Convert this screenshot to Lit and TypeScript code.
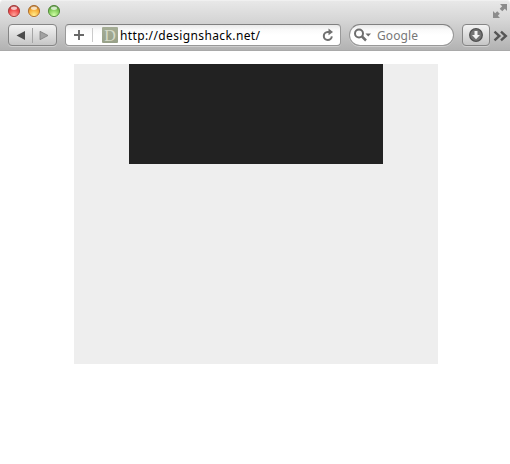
import { LitElement, html, css } from "lit";
import { customElement } from "lit/decorators.js";

@customElement("browser-chrome")
class BrowserChrome extends LitElement {
  static styles = css`
    :host { display: block; }
    * { box-sizing: border-box; }
    svg { display: block; flex: none; }
    .chrome {
      height: 51px;
      background: linear-gradient(#e9e9e9 0, #d6d6d6 20px, #b2b2b2 50px);
      border-bottom: 1px solid #a9a9a9;
      border-radius: 4px 4px 0 0;
      box-shadow: inset 0 1px #f0f0f0;
    }
    .title { height: 24px; display: flex; justify-content: space-between; padding: 4px 3px 0 7px; }
    .lights { display: flex; gap: 6px; }
    .bar { height: 22px; display: flex; gap: 8px; padding-left: 8px; }
    .button {
      height: 22px; border: 1px solid #858585; border-radius: 4px;
      background: linear-gradient(#f3f3f3, #c6c6c6);
      box-shadow: 0 1px rgba(255,255,255,.35);
      display: flex; align-items: center;
    }
    .nav { width: 49px; }
    .download { width: 28px; padding-left: 6px; }
    .field {
      height: 22px; border: 1px solid #999; border-top-color: #808080;
      background: linear-gradient(#e9e9e9, #fafafa 5px, #fff 10px, #fff);
      box-shadow: 0 1px rgba(255,255,255,.35);
      display: flex; align-items: center;
    }
    .address { width: 276px; border-radius: 4px; padding: 0 6px 0 8px; }
    .rule { width: 1px; height: 14px; background: #cbcbcb; margin: 0 9px 0 7px; }
    .favicon {
      width: 16px; height: 16px; border-radius: 1px; background: linear-gradient(#a5ad95, #98a189);
      color: #d5dac9; font: 16px/17px "Liberation Serif", serif; text-align: center;
    }
    .url { font: 12px/18px "Noto Sans", sans-serif; color: #000; margin-left: 2px; padding-top: 2px; flex: 1; white-space: nowrap; letter-spacing: .38px; }
    .search { width: 105px; border-radius: 11px; padding-left: 4px; }
    .hint { font: 12px/18px "Noto Sans", sans-serif; color: #777; margin-left: 5px; padding-top: 2px; letter-spacing: .1px; }
    .more { margin: 6px 0 0 -5px; }
  `;

  light(name: string, edge: string, mid: string, glow: string) {
    return html`<svg width="14" height="14" viewBox="0 0 14 14">
      <defs>
        <radialGradient id=${name} cx=".5" cy=".85" r=".85">
          <stop offset="0" stop-color=${glow}/><stop offset=".6" stop-color=${mid}/><stop offset="1" stop-color=${edge}/>
        </radialGradient>
      </defs>
      <circle cx="7" cy="7.5" r="6" fill="#fff" opacity=".4"/>
      <circle cx="7" cy="7" r="5.600" fill="url(#${name})" stroke=${edge} stroke-width=".9"/>
      <ellipse cx="7" cy="4.200" rx="3" ry="1.700" fill="#fff" opacity=".7"/>
    </svg>`;
  }

  render() {
    return html`<div class="chrome">
      <div class="title">
        <div class="lights">
          ${this.light("close", "#a33a3a", "#ef4747", "#ffa59b")}
          ${this.light("minimize", "#a86a2c", "#f7ac35", "#ffec8c")}
          ${this.light("zoom", "#4f8639", "#80ca58", "#d0ffa5")}
        </div>
        <svg width="14" height="14" viewBox="0 0 14 14" fill="#8c8c8c">
          <path d="M7 0h7v7l-2.200-2.200L9.300 7.300 6.700 4.700 9.200 2.200zM7 14H0V7l2.200 2.200 2-2 2.600 2.600-2 2z"/>
        </svg>
      </div>
      <div class="bar">
        <div class="button nav">
          <svg width="47" height="20" viewBox="0 0 47 20">
            <path d="M7.500 10.500 16 6v9z" fill="#4b4b4b"/>
            <path d="M23.500 3v15" stroke="#a5a5a5"/>
            <path d="M39 10.500 31 6.300v8.400z" fill="#a2a2a2" stroke="#7d7d7d" stroke-width=".8"/>
          </svg>
        </div>
        <div class="field address">
          <svg width="11" height="20" viewBox="0 0 11 20"><path d="M0 10h10M5 5v10" stroke="#686868" stroke-width="1.900"/></svg>
          <span class="rule"></span>
          <span class="favicon">D</span>
          <span class="url">http://designshack.net/</span>
          <svg width="12" height="14" viewBox="0 0 12 14">
            <path d="M8 4H5.700A4 4 0 1 0 9.800 8.300" fill="none" stroke="#707070" stroke-width="2"/>
            <path d="M6.500 .5v6.800L11 4z" fill="#707070"/>
          </svg>
        </div>
        <div class="field search">
          <svg width="18" height="16" viewBox="0 0 18 16">
            <circle cx="5" cy="6.500" r="4" fill="none" stroke="#6e6e6e" stroke-width="2"/>
            <path d="m8 9.500 4 4" stroke="#6e6e6e" stroke-width="2.500"/>
            <path d="M11.500 6.500H17l-2.750 3z" fill="#6e6e6e"/>
          </svg>
          <span class="hint">Google</span>
        </div>
        <div class="button download">
          <svg width="14" height="14" viewBox="0 0 14 14">
            <circle cx="7" cy="7" r="6.300" fill="#747474" stroke="#505050" stroke-width="1.300"/>
            <path d="M5.500 3h3v4H11l-4 4.200L3 7h2.500z" fill="#f4f4f4"/>
          </svg>
        </div>
        <svg class="more" width="16" height="12" viewBox="0 0 16 12">
          <path d="m1.500 1.700 4.800 4.300-4.800 4.300M8 1.700 12.800 6 8 10.300" fill="none" stroke="#555" stroke-width="2.400"/>
        </svg>
      </div>
    </div>`;
  }
}

@customElement("app-root")
class AppRoot extends LitElement {
  static styles = css`
    :host { display: block; height: 464px; background: #fff; overflow: hidden; }
    .outer { width: 364px; height: 300px; margin: 13px 0 0 74px; background: #eee; }
    .inner { width: 254px; height: 100px; margin-left: 55px; background: #222; float: left; }
  `;
  render() {
    return html`<browser-chrome></browser-chrome>
      <div class="outer"><div class="inner"></div></div>`;
  }
}
